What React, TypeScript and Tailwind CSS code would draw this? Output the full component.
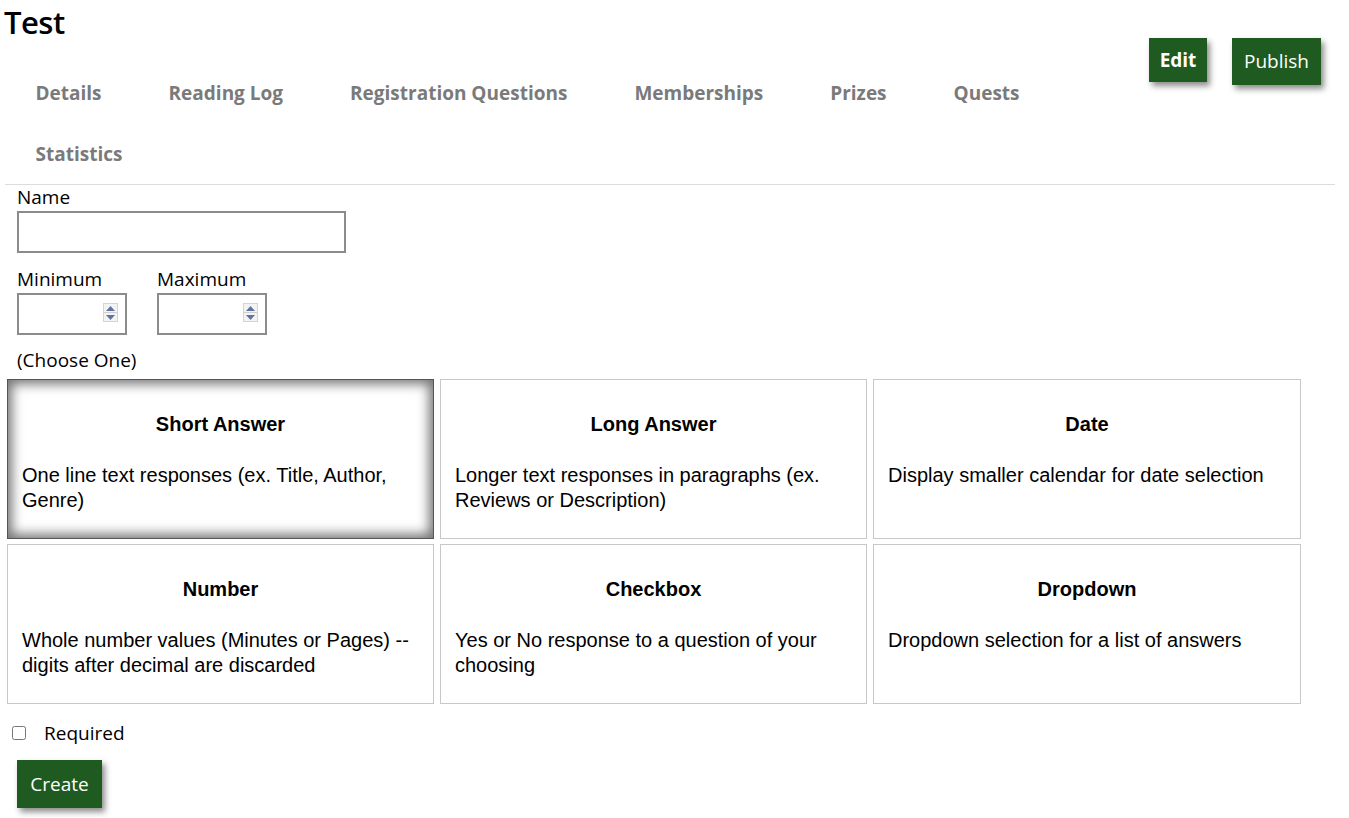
import { useState } from 'react'

const TABS = ['Details', 'Reading Log', 'Registration Questions', 'Memberships', 'Prizes', 'Quests', 'Statistics']

const TYPES = [
  { key: 'short', title: 'Short Answer', text: 'One line text responses (ex. Title, Author, Genre)' },
  { key: 'long', title: 'Long Answer', text: 'Longer text responses in paragraphs (ex. Reviews or Description)' },
  { key: 'date', title: 'Date', text: 'Display smaller calendar for date selection' },
  { key: 'number', title: 'Number', text: 'Whole number values (Minutes or Pages) -- digits after decimal are discarded' },
  { key: 'checkbox', title: 'Checkbox', text: 'Yes or No response to a question of your choosing' },
  { key: 'dropdown', title: 'Dropdown', text: 'Dropdown selection for a list of answers' },
]

const UI_FONT = "font-['Open_Sans',sans-serif]"

function Spinner() {
  return (
    <span className="absolute right-[9px] top-[10px] flex flex-col w-[15px] h-[19px] border border-[#d4d4d4] bg-[#f3f3f3]">
      <span className="flex-1 flex items-center justify-center border-b border-[#cfcfcf]">
        <svg width="9" height="5" viewBox="0 0 9 5"><path d="M4.5 0 L9 5 L0 5 Z" fill="#5f74a0" /></svg>
      </span>
      <span className="flex-1 flex items-center justify-center">
        <svg width="9" height="5" viewBox="0 0 9 5"><path d="M0 0 L9 0 L4.5 5 Z" fill="#5f74a0" /></svg>
      </span>
    </span>
  )
}

function NumberBox() {
  return (
    <div className="relative w-[110px] h-[42px]">
      <input type="text" className="w-full h-full border-2 border-[#8c8c8c] bg-white px-2 outline-none" />
      <Spinner />
    </div>
  )
}

export default function App() {
  const [selected, setSelected] = useState('short')
  const [required, setRequired] = useState(false)

  return (
    <div className={`min-h-screen bg-white text-black ${UI_FONT}`}>
      {/* Header */}
      <div className="flex items-start">
        <div className="flex flex-col">
          <h1 className="pl-[4px] text-[31px] font-semibold leading-[44px] h-[44px] tracking-[-0.5px]">Test</h1>
          <div className="flex flex-wrap w-[1120px] ml-[2px] mt-[19px]">
            {TABS.map(t => (
              <button
                key={t}
                className="h-[61px] px-[33.5px] flex items-center text-[19px] font-bold text-[#7a7a7a]"
              >
                {t}
              </button>
            ))}
          </div>
        </div>
        <div className="flex items-start gap-[25px] mt-[38px] ml-[27px]">
          <button className="w-[58px] h-[44px] bg-[#1f5a20] text-white text-[19px] font-bold shadow-[3px_4px_6px_rgba(0,0,0,0.45)]">
            Edit
          </button>
          <button className="w-[89px] h-[47px] bg-[#1f5a20] text-white text-[19px] shadow-[3px_4px_6px_rgba(0,0,0,0.45)]">
            Publish
          </button>
        </div>
      </div>
      <div className="ml-[5px] w-[1330px] h-px bg-[#dcdcdc] -mt-[1px]" />

      {/* Form */}
      <div className="flex flex-col">
        <div className="pl-[17px] flex flex-col">
          <label className="text-[19px] leading-[22px] mt-[1px]">Name</label>
          <input type="text" className="mt-[3px] w-[329px] h-[42px] border-2 border-[#8c8c8c] px-2 outline-none" />
          <div className="flex gap-[30px] mt-[15px]">
            <div className="flex flex-col">
              <label className="text-[19px] leading-[22px]">Minimum</label>
              <div className="mt-[3px]"><NumberBox /></div>
            </div>
            <div className="flex flex-col">
              <label className="text-[19px] leading-[22px]">Maximum</label>
              <div className="mt-[3px]"><NumberBox /></div>
            </div>
          </div>
          <div className="text-[19px] leading-[22px] mt-[14px]">(Choose One)</div>
        </div>

        <div className="grid grid-cols-[427px_427px_428px] gap-x-[6px] gap-y-[5px] ml-[7px] mt-[8px] font-['Liberation_Sans',Arial,sans-serif]">
          {TYPES.map(t => {
            const on = t.key === selected
            return (
              <button
                key={t.key}
                onClick={() => setSelected(t.key)}
                className={`h-[160px] flex flex-col text-left pt-[33px] pl-[14px] pr-[20px] border ${
                  on ? 'border-[#555] shadow-[inset_0_0_12px_4px_rgba(0,0,0,0.55)]' : 'border-[#c8c8c8]'
                }`}
              >
                <div className="w-full text-center text-[20px] leading-[23px] font-bold pl-[6px]">{t.title}</div>
                <div className="mt-[27px] text-[20px] leading-[25px]">{t.text}</div>
              </button>
            )
          })}
        </div>

        <label className="flex items-center ml-[12px] mt-[18px] h-[22px] text-[19px]">
          <input
            type="checkbox"
            checked={required}
            onChange={e => setRequired(e.target.checked)}
            className="w-[14px] h-[14px] m-0"
          />
          <span className="ml-[18px]">Required</span>
        </label>

        <div className="pl-[17px] mt-[16px] pb-4">
          <button className="w-[85px] h-[48px] bg-[#1f5a20] text-white text-[19px] shadow-[3px_4px_6px_rgba(0,0,0,0.45)]">
            Create
          </button>
        </div>
      </div>
    </div>
  )
}
